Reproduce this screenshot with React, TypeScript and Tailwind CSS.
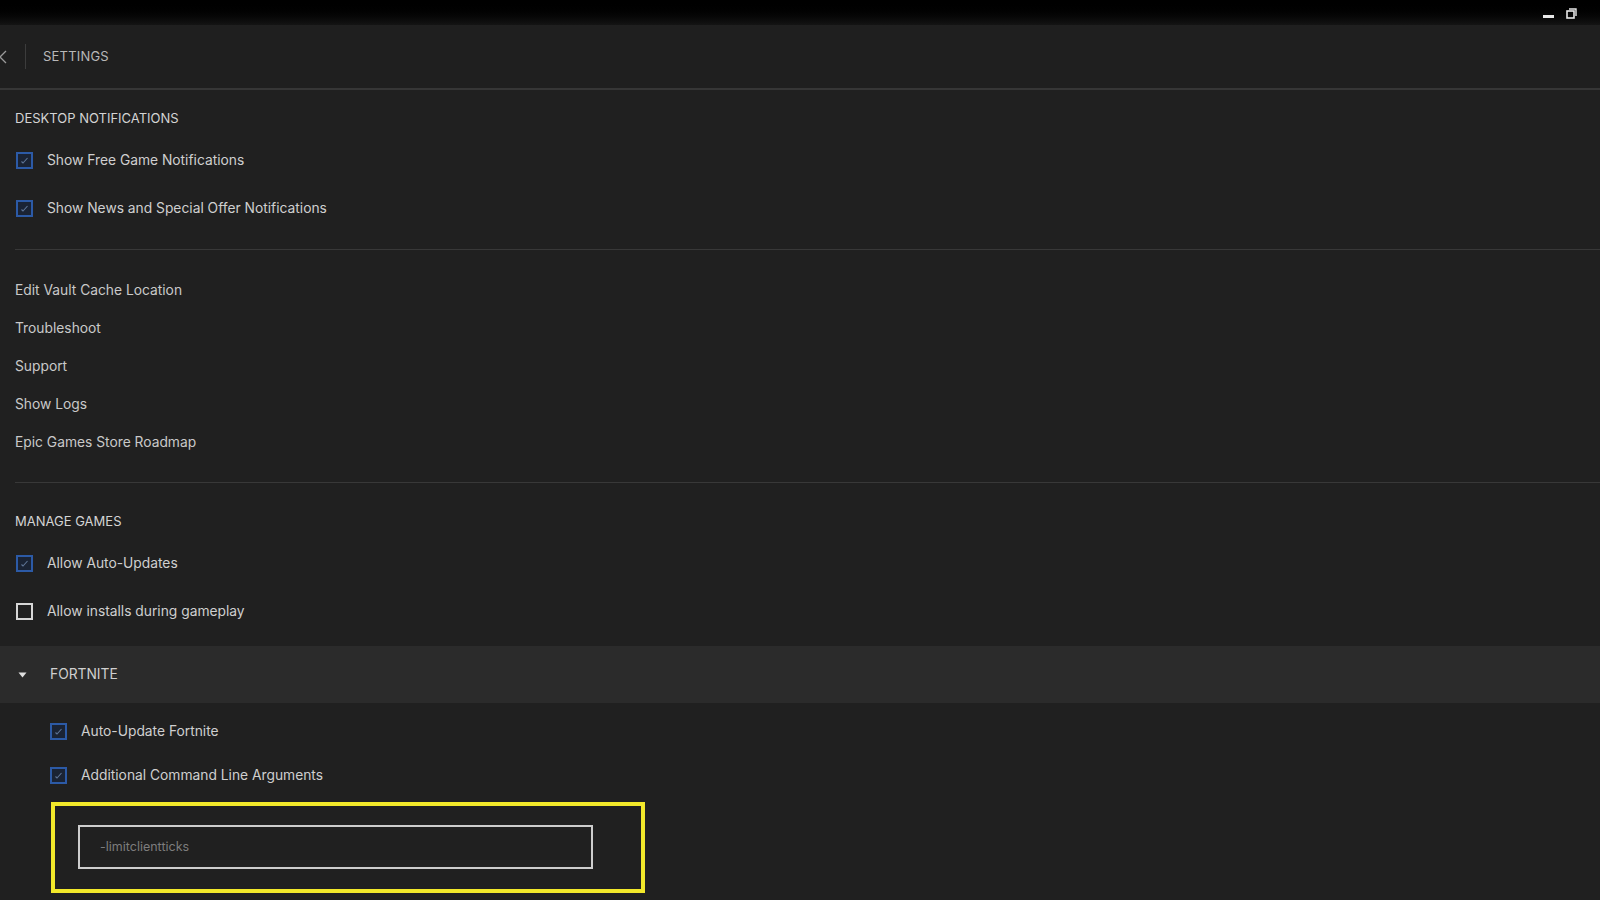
import React from "react";

type CheckProps = { checked?: boolean };

const Check = ({ checked = true }: CheckProps) =>
  checked ? (
    <span className="flex h-[17px] w-[17px] shrink-0 items-center justify-center border-2 border-[#2c5aa6] bg-[#1a2334]">
      <svg width="9" height="9" viewBox="0 0 9 9">
        <path d="M1.5 5.5 L3 7 L7.5 2" fill="none" stroke="#5f7597" strokeWidth="1.1" />
      </svg>
    </span>
  ) : (
    <span className="h-[17px] w-[17px] shrink-0 border-2 border-[#d6d6d6]" />
  );

const CheckRow = ({ label, checked = true, h = "h-[48px]" }: { label: string; checked?: boolean; h?: string }) => (
  <div className={`flex ${h} items-center gap-[14px]`}>
    <Check checked={checked} />
    <span className="text-[13.8px] text-[#cfcfcf]">{label}</span>
  </div>
);

const links = [
  "Edit Vault Cache Location",
  "Troubleshoot",
  "Support",
  "Show Logs",
  "Epic Games Store Roadmap",
];

export default function App() {
  return (
    <div className="flex h-[900px] w-[1600px] flex-col overflow-hidden bg-[#202020] font-['Inter','Noto_Sans',sans-serif]">
      {/* title bar */}
      <div className="flex h-[25px] items-center justify-end gap-[12px] bg-gradient-to-b from-[#000] to-[#141414] pr-[23px]">
        <span className="mt-[8px] h-[3px] w-[11px] bg-[#e8e8e8]" />
        <svg width="11" height="11" viewBox="0 0 11 11" className="mt-[2px]">
          <rect x="1" y="3" width="7" height="7" fill="none" stroke="#e8e8e8" strokeWidth="1.6" />
          <path d="M3 1 H10 V8" fill="none" stroke="#e8e8e8" strokeWidth="1.4" />
        </svg>
      </div>

      {/* header */}
      <div className="flex h-[65px] items-center border-b-2 border-[#363636] bg-[#1f1f1f]">
        <svg width="10" height="14" viewBox="0 0 10 14" className="-ml-[3px]">
          <path d="M9 1 L3 7 L9 13" fill="none" stroke="#9a9a9a" strokeWidth="1.3" />
        </svg>
        <span className="ml-[18px] h-[25px] w-px bg-[#3c3c3c]" />
        <span className="ml-[17px] text-[13px] tracking-[0.2px] text-[#b8b8b8]">SETTINGS</span>
      </div>

      {/* desktop notifications */}
      <div className="pl-[15px] pt-[19px]">
        <div className="flex h-5 items-center text-[13px] text-[#d4d4d4]">DESKTOP NOTIFICATIONS</div>
        <div className="mt-[7px] pl-px">
          <CheckRow label="Show Free Game Notifications" />
          <CheckRow label="Show News and Special Offer Notifications" />
        </div>
        <div className="mt-[17px] h-px bg-[#383838]" />

        <div className="mt-[21px]">
          {links.map((l) => (
            <div key={l} className="flex h-[38px] items-center text-[13.8px] text-[#c9c9c9]">
              {l}
            </div>
          ))}
        </div>
        <div className="mt-[21px] h-px bg-[#383838]" />

        <div className="mt-[29px] flex h-5 items-center text-[13px] text-[#d4d4d4]">MANAGE GAMES</div>
        <div className="mt-[7px] pl-px">
          <CheckRow label="Allow Auto-Updates" />
          <CheckRow label="Allow installs during gameplay" checked={false} />
        </div>
      </div>

      {/* fortnite */}
      <div className="mt-[11px] flex h-[57px] items-center bg-[#2b2b2b]">
        <svg width="9" height="6" viewBox="0 0 9 6" className="ml-[18px]">
          <path d="M0.5 0.5 H8.5 L4.5 5.5 Z" fill="#e0e0e0" />
        </svg>
        <span className="ml-[23px] text-[13.8px] text-[#cfcfcf]">FORTNITE</span>
      </div>

      <div className="mt-[6px] pl-[50px]">
        <CheckRow label="Auto-Update Fortnite" h="h-[44px]" />
        <CheckRow label="Additional Command Line Arguments" h="h-[44px]" />
      </div>

      <div className="ml-[51px] mt-[5px] h-[91px] w-[594px] border-4 border-[#f2e82a] pl-[23px] pt-[19px]">
        <div className="flex h-[44px] w-[515px] items-center border-2 border-[#cdcdcd] pl-[20px] text-[12.5px] text-[#7d7d7d]">
          -limitclientticks
        </div>
      </div>
    </div>
  );
}
